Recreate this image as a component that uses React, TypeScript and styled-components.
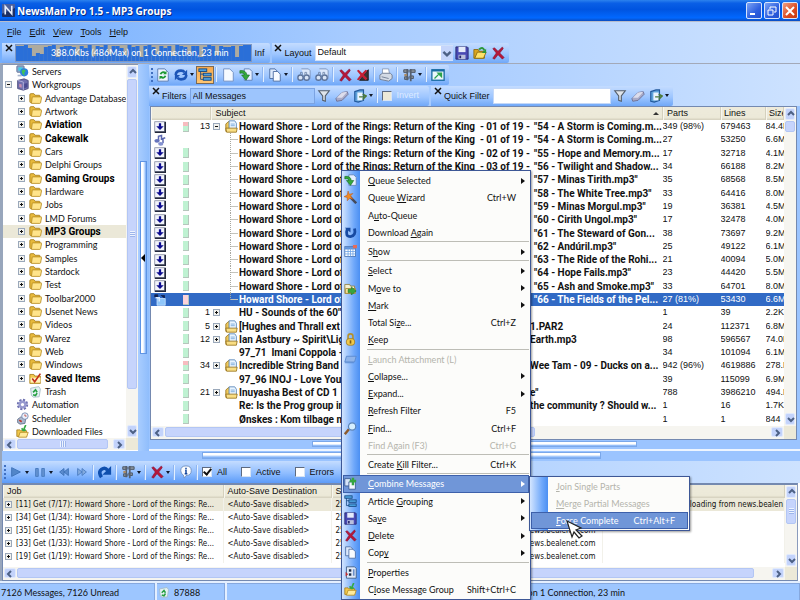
import React from 'react';
import styled, { createGlobalStyle, css } from 'styled-components';

const ui = '"Liberation Sans", Arial, sans-serif';
const menuFont = 'Lato, "Liberation Sans", sans-serif';
const boldFont = 'Roboto, "Liberation Sans", sans-serif';
const tinyFont = '"DejaVu Sans Condensed", "Liberation Sans", sans-serif';

const Global = createGlobalStyle`
  * { box-sizing: border-box; }
  body { margin: 0; font: 9px/13px ${ui}; color: #111; background: #9fc7ff; overflow: hidden; }
  button, input, select { font: inherit; color: inherit; margin: 0; padding: 0; border: 0; background: none; }
  svg { display: block; flex: none; }
  ul { list-style: none; margin: 0; padding: 0; }
`;

/* ---------- icons ---------- */

const art: Record<string, React.ReactNode> = {
  app: (<><rect width="16" height="16" rx="1" fill="#1b2f66" /><path d="M0 0h16v5L0 12z" fill="#4a5f9c" /><path d="M4 13V3l8 9V2" fill="none" stroke="#e8eefc" strokeWidth="2" /></>),
  servers: (<><rect x="1" y="1" width="9" height="8" rx="1" fill="#8ea4c8" stroke="#5f7398" /><rect x="3" y="3" width="5" height="4" fill="#3ad0e8" /><circle cx="10" cy="9" r="5" fill="#2c7fe0" /><path d="M7 7q3-3 5 0l-2 3 1 3q-4-1-4-6z" fill="#3fc25a" /><path d="M2 12h5v2H2z" fill="#a6b4cc" /></>),
  work: (<><path d="M2 3l8-2 5 2v10l-6 2-7-2z" fill="#6f6fae" stroke="#454578" /><path d="M2 3l7 2v10" fill="none" stroke="#b9b9e2" /><path d="M4 7l3 1v4l-3-1z" fill="#c98fb0" /><path d="M10 7l4-1v5l-4 2z" fill="#4a4a90" /></>),
  folder: (<><path d="M1 3.500q0-1.500 1.500-1.500h3.500l1.500 2h5q1 0 1 1v8H2q-1 0-1-1z" fill="#e7b93c" stroke="#a57c1a" /><path d="M3 14l1-7.500q0-.5.5-.5H15q.7 0 .5.8L14.300 13q-.2 1-1 1z" fill="#ffe48a" stroke="#b58a20" /></>),
  saved: (<><path d="M1 3h5l1 2h7v9H1z" fill="#f2c94c" stroke="#a57c1a" /><path d="M2 7h12v6H2z" fill="#fff2c0" /><path d="M4 8l3 4 7-10" fill="none" stroke="#c22f1c" strokeWidth="2" /></>),
  trash: (<><path d="M2 4l10-2 2 3-1.500 9.500-7 .5L3 13z" fill="#e4f1f4" stroke="#9fb8c0" /><path d="M5 9l3-3 2 3M10 10l-2 3-3-1" fill="none" stroke="#27a043" strokeWidth="2" /></>),
  gear: (<><circle cx="8" cy="8" r="5.500" fill="none" stroke="#6d70b0" strokeWidth="3" strokeDasharray="2.500 1.800" /><circle cx="8" cy="8" r="5" fill="#9699ce" /><circle cx="8" cy="8" r="2" fill="#fff" /></>),
  sched: (<><path d="M2 9l4-3 6 2-1 6-6 1-3-2z" fill="#a9b6cc" stroke="#5d6c88" /><circle cx="11" cy="5" r="4" fill="#eaf0fb" stroke="#6b7fa6" /><path d="M11 3v2h2" stroke="#c0392b" fill="none" /><path d="M4 10l3 2" stroke="#c0392b" strokeWidth="2" /></>),
  down: (<><path d="M1 6h4l1 1h7v7H1z" fill="#f2c94c" stroke="#a57c1a" /><path d="M3 15l2-6h10l-2 6z" fill="#ffeb9c" stroke="#b58a20" /><path d="M12 0L9 7M9 7L7 4M9 7l3-1" stroke="#35a845" strokeWidth="2" fill="none" /></>),
  refreshPage: (<><path d="M2 1h8l4 4v10H2z" fill="#eef5ff" stroke="#5275ad" /><path d="M5 7q3-4 6-1M11 9q-3 4-6 1" fill="none" stroke="#1f9a36" strokeWidth="2" /><path d="M12 3v4H8zM4 13V9h4z" fill="#1f9a36" /></>),
  cycle: (<><path d="M2 8q0-5 6-5 3 0 4 2M14 8q0 5-6 5-3 0-4-2" fill="none" stroke="#1c55b8" strokeWidth="3" /><path d="M15 2v6H9zM1 14V8h6z" fill="#1c55b8" /></>),
  tree: (<><path d="M3 3v10h5M3 7h5" fill="none" stroke="#1b4a84" /><rect x="1" y="1" width="9" height="3" fill="#4da2e0" stroke="#12457e" /><rect x="6" y="6" width="9" height="3" fill="#4da2e0" stroke="#12457e" /><rect x="6" y="11" width="9" height="3" fill="#4da2e0" stroke="#12457e" /></>),
  page: (<path d="M3 1h7l4 4v10H3z" fill="#f6faff" stroke="#6c8cc0" />),
  pageArrow: (<><path d="M6 1h6l3 3v10H6z" fill="#e6efff" stroke="#5d7fb6" /><path d="M1 3q7-1 8 5h3l-4 6-5-6h3Q6 5 1 6z" fill="#34a83c" stroke="#156b20" strokeWidth=".7" /></>),
  copy: (<><path d="M2 1h6l3 3v8H2z" fill="#dce9fc" stroke="#47689f" /><path d="M6 4h5l3 3v8H6z" fill="#f8fbff" stroke="#47689f" /></>),
  bino: (<><path d="M5 1h8l2 2v9H9" fill="#dce8fb" stroke="#7890b8" /><circle cx="4" cy="11" r="3" fill="#d8e4f6" stroke="#5b7198" strokeWidth="1.500" /><circle cx="11" cy="11" r="3" fill="#d8e4f6" stroke="#5b7198" strokeWidth="1.500" /><path d="M4 8V5h2v4h3V5h2v3" stroke="#7288ac" fill="none" /></>),
  x: (<path d="M2 3l2-1 4 4 5-5 1 2-4 5 5 5-2 2-5-5-4 5-2-1 4-6z" fill="#b5173b" stroke="#7c0f2c" strokeWidth=".6" />),
  xBlack: (<><path d="M14 2v12H4z" fill="#3c3434" stroke="#111" /><path d="M1 3l2-1 4 4 4-4 2 1-4 5 4 4-2 2-4-4-4 4-2-1 4-5z" fill="#c21f34" /></>),
  printer: (<><path d="M4 1h7l1 6H4z" fill="#fff" stroke="#8a9ab6" /><path d="M1 8l3-2h9l2 2v4l-4 3-10-2z" fill="#d3dae5" stroke="#6d7990" /><path d="M3 10l8 2" stroke="#6d7990" /></>),
  tools: (<><path d="M2 2h5v3H2zM9 2h6v3H9zM3 10h4v3H3zM9 9h4v3H9z" fill="#8b949e" stroke="#46505e" /><path d="M6 1v13M10 1v14" stroke="#56606e" strokeWidth="2" /><circle cx="4" cy="8" r="1.500" fill="#b08a5c" /></>),
  window: (<><rect x="1" y="2" width="14" height="12" fill="#eaf7fb" stroke="#176ba3" strokeWidth="1.500" /><path d="M1 3h14" stroke="#176ba3" strokeWidth="2" /><path d="M4 12l5-5M8 6h4v4z" fill="#2ba24c" stroke="#2ba24c" strokeWidth="1.500" /></>),
  funnel: (<path d="M2 2h12L9.500 8v6l-3-1V8z" fill="#dfe4ea" stroke="#545e6a" strokeWidth="1.300" />),
  eraser: (<><path d="M1 11l7-7 6-1 1 3-7 7-6 1z" fill="#a9abc8" stroke="#6c6e92" /><path d="M2 10l6-6 6-1-6 7z" fill="#dcddec" /></>),
  door: (<><path d="M2 3l6-2h4v12l-6 2-4-1z" fill="#5fa3dc" stroke="#23599c" strokeWidth="1.300" /><path d="M5 4h6v9H5z" fill="#eaf4ff" /><path d="M7 9h7M11 6l4 2-4 4" fill="none" stroke="#4d7a3a" strokeWidth="1.700" /></>),
  save: (<><path d="M1 1h13l1 1v13H1z" fill="#4a4ab4" stroke="#26266c" /><path d="M4 1h8v6H4z" fill="#e5ebfa" /><path d="M4 10h8v5H4z" fill="#b9c0dc" /><path d="M5 11h2v3H5z" fill="#26266c" /></>),
  open: (<><path d="M1 4h5l1 2h6v8H1z" fill="#d9a520" stroke="#8c6a10" /><path d="M2 14l3-7h10l-3 7z" fill="#ffe26a" stroke="#8c6a10" /><path d="M7 4q4-4 6 1" stroke="#2c9838" strokeWidth="2.200" fill="none" /><path d="M15 3v5h-5z" fill="#2c9838" /></>),
  play: (<path d="M3 3l10 5-10 5z" fill="#5286c9" stroke="#3c70b6" />),
  pause: (<path d="M3 4h3v9H3zM10 4h3v9h-3z" fill="#6593d2" stroke="#4578bd" />),
  rew: (<path d="M8 4v8L3 8zM13 4v8L8 8z" fill="#5b8bce" stroke="#3c70b6" />),
  ff: (<path d="M3 4l5 4-5 4zM8 4l5 4-5 4z" fill="#82aade" stroke="#4a7cc0" />),
  redo: (<><path d="M4 14Q0 8 4 5q4-3 7 1" fill="none" stroke="#0f4fae" strokeWidth="4" /><path d="M15 1v10H5z" fill="#0f4fae" /></>),
  undo: (<><path d="M4 4q-3 9 4 9 7-1 5-10" fill="none" stroke="#174aa2" strokeWidth="3.500" /><path d="M1 2h7v6z" fill="#174aa2" /></>),
  info: (<><path d="M8 1q6 0 6 5.500T8 12l-2 3-1-3.500Q2 10 2 6.500 2 1 8 1z" fill="#fbfdff" stroke="#6f8fbe" /><path d="M8 3v1.500M7 6h1v4M6.500 10h3" stroke="#12459c" strokeWidth="1.700" fill="none" /></>),
  wizard: (<><path d="M7 7l8 8" stroke="#444a5c" strokeWidth="3" /><path d="M5 0l1.500 4L11 3 8 6l3 4-4-1-3 3v-4L0 7l4-2z" fill="#f08a24" stroke="#b4521a" strokeWidth=".6" /></>),
  grid: (<><rect x="1" y="2" width="13" height="12" fill="#fff" stroke="#3f6db0" /><path d="M1 4h13" stroke="#5f93da" strokeWidth="3" /><path d="M1 8h13M1 11h13M5 4v10M8 4v10M11 4v10" stroke="#6fa4e6" /><rect x="11" y="0" width="5" height="4" fill="#e26d5c" /></>),
  move: (<><path d="M1 3h6l1 2h5v9H1z" fill="#f4f0d2" stroke="#8c7a3a" /><path d="M2 8h12v6H2z" fill="#ffe9a0" stroke="#a08530" /><path d="M5 9h4V6l6 5-6 5v-3H5z" fill="#37a53c" stroke="#1a6e22" strokeWidth=".7" /></>),
  lock: (<><path d="M5 8V4q0-3 3-3t3 3v4" fill="none" stroke="#b5912c" strokeWidth="2" /><rect x="3" y="7" width="10" height="8" rx="3" fill="#f1c94a" stroke="#a37b18" /><path d="M8 9v4" stroke="#7c5a10" strokeWidth="2" /></>),
  launch: (<path d="M3 4h12l-2 7H1zM1 12h11" fill="#8fb4ea" stroke="#5585cc" />),
  find: (<><path d="M1 15l5-6" stroke="#8c5a2c" strokeWidth="3" /><circle cx="10" cy="5.500" r="4.500" fill="#d6efff" stroke="#5a83b8" strokeWidth="1.500" /></>),
  combine: (<><path d="M1 2h7v9H1z" fill="#d9e6fa" stroke="#34568c" /><path d="M6 6h8v9H6z" fill="#f4f8ff" stroke="#34568c" /><path d="M11 1v9M7 5h8" stroke="#36a640" strokeWidth="3" /></>),
  props: (<><path d="M3 1h10l2 2v12H3z" fill="#dfe9f8" stroke="#33527e" /><path d="M6 4h3v3H6z" fill="#1c2c48" /><path d="M6 9h3v3H6z" fill="#1c2c48" /><path d="M2 7l3 3-3 3z" fill="#c32b2b" /><path d="M11 4h2v8h-2z" fill="#6b8fc8" /></>),
  mail: (<><path d="M1 5l3-3h2l1 3v9H1z" fill="#efc85a" stroke="#95701a" /><path d="M5 1h7l2 3v8H5z" fill="#e9f4ff" stroke="#4d7fb6" /><path d="M7 5h5M7 7h5" stroke="#6fa3d8" /><path d="M1 10h14l-1 5H2z" fill="#f9de84" stroke="#95701a" /></>),
  box: (<><rect x="1" y="1" width="13" height="13" fill="#f2f4fb" stroke="#7c8298" /><path d="M15 1v14H1" fill="none" stroke="#23283c" strokeWidth="2" /><path d="M8 3v5" stroke="#0b0b90" strokeWidth="3" /><path d="M3 7h10l-5 5z" fill="#0b0b90" /></>),
  notes: (<><path d="M6 10V3l4-1v6M12 12V6l3-1" fill="none" stroke="#5b67b0" strokeWidth="2" /><ellipse cx="4" cy="9" rx="3.500" ry="2.500" fill="#6674bc" /><ellipse cx="9" cy="13" rx="3.500" ry="2.500" fill="#8491d0" /></>),
  disc: (<><path d="M1 1h4v3H1zM9 2h5v4" fill="#10204e" stroke="#10204e" /><path d="M4 6h11v9H4z" fill="#8fc6fa" stroke="#cfe5ff" /><path d="M2 5h5v5" stroke="#d6e8ff" fill="none" strokeWidth="2" /></>),
};

const Icon = ({ n, s = 14 }: { n: string; s?: number }) => (
  <svg width={s} height={s} viewBox="0 0 16 16" aria-hidden="true">{art[n]}</svg>
);

const Arrow = ({ dir }: { dir: 'up' | 'down' | 'left' | 'right' }) => {
  const d = { up: 'M2 6l3-3 3 3', down: 'M2 4l3 3 3-3', left: 'M6 2L3 5l3 3', right: 'M4 2l3 3-3 3' }[dir];
  return <svg width="10" height="10" viewBox="0 0 10 10"><path d={d} fill="none" stroke="#4d6185" strokeWidth="2" /></svg>;
};

/* ---------- frame ---------- */

const Window = styled.div`
  position: relative; display: flex; flex-direction: column; height: 100vh; min-height: 600px; overflow: hidden;
`;
const TitleBar = styled.header`
  display: flex; align-items: center; height: 21px; padding: 0 2px; gap: 2px;
  background: linear-gradient(#2c82ee, #0a5fe6 15%, #0054e0 45%, #0168ff 85%, #0b4cc0);
`;
const Title = styled.h1`
  flex: 1; margin: 0; color: #fff; font: 700 10px/14px "Open Sans", sans-serif; text-shadow: 1px 1px #0a2a80;
`;
const Caption = styled.button<{ $close?: boolean }>`
  display: grid; place-items: center; width: 16px; height: 17px; border: 1px solid #d6e4fc; border-radius: 2px;
  background: ${(p) => (p.$close ? 'linear-gradient(135deg, #f0a084, #dc4a20 60%, #c33a12)' : 'linear-gradient(135deg, #7ba2f4, #2d5fe0 60%, #2350cc)')};
`;
const MenuBar = styled.nav`
  display: flex; align-items: center; height: 21px; padding: 0 7px; gap: 8px; border-top: 1px solid #b8bccb;
  background: linear-gradient(90deg, #75affe, #a8ccff 45%, #cde2ff);
`;
const Dock = styled.div<{ $line?: boolean }>`
  display: flex; align-items: center; height: ${(p) => (p.$line ? 22 : 21)}px;
  background: linear-gradient(90deg, #88b9fe, #a8ccff 45%, #cde2ff);
  ${(p) => p.$line && css`border-bottom: 1px solid #a3a9b8; padding-left: 2px; background: linear-gradient(90deg, #75affe, #a8ccff 45%, #cde2ff);`}
`;
const Band = styled.div`
  display: flex; align-items: center; flex: none; height: 20px; margin-right: 2px; padding-right: 2px;
  background: linear-gradient(#c4dcff, #9ec6ff 55%, #70a8f8); border-radius: 0 2px 2px 0;
`;
const CloseBtn = styled.button`
  display: grid; justify-items: center; align-content: start; width: 13px; height: 18px; flex: none;
`;
const Grip = styled.span`
  width: 2px; height: 14px; margin: 0 1px 0 2px; border-left: 2px dotted #3f6fc0;
`;
const ToolButton = styled.button<{ $on?: boolean }>`
  display: grid; place-items: center; flex: none; width: 18px; height: 18px;
  ${(p) => p.$on && css`background: linear-gradient(#f6a94e, #ffc672); border: 1px solid #7a6a58;`}
`;
const CaretBtn = styled.button`
  flex: none; width: 6px; height: 18px; display: grid; place-items: center start;
  &::before { content: ''; border: 2px solid transparent; border-top: 3px solid #101828; border-bottom: 0; }
`;
const Sep = styled.span`
  flex: none; width: 2px; height: 15px; margin: 0 2px 0 1px; background: #e2efff; border-left: 1px solid #8eb6f2;
`;
const Graph = styled.div`
  display: grid; width: 237px; height: 18px; background: #aeab9f; border: 1px solid #7e98c4;
  & > * { grid-area: 1 / 1; }
  svg { width: 100%; height: 16px; }
`;
const GraphText = styled.span` align-self: center; padding-left: 35px; color: #fff; font: 9px/13px ${menuFont}; z-index: 1; `;
const BandLabel = styled.label` padding: 2px 3px 0 0; white-space: nowrap; `;
const LayoutSelect = styled.select`
  appearance: none; width: 138px; height: 16px; padding-left: 2px; background: #fff; border: 1px solid #cfe0fa; border-right: 0;
`;
const SelectWrap = styled.span`
  display: flex; align-items: center; background: #fff;
  svg { margin-left: -12px; width: 12px; height: 14px; background: #c5d5fb; pointer-events: none; }
`;
const Field = styled.input<{ $blue?: boolean }>`
  width: ${(p) => (p.$blue ? 125 : 118)}px; height: 16px; padding: 0 2px;
  background: ${(p) => (p.$blue ? '#9dc5fd' : '#fff')}; border: 1px solid ${(p) => (p.$blue ? '#7ba3e2' : '#c4d8f8')};
`;
const Tick = styled.input`
  appearance: none; width: 10px; height: 10px; background: #fff; border: 1px solid #5d6a80; border-right-color: #d7e4f5; border-bottom-color: #d7e4f5;
  display: grid; place-items: center; flex: none;
  &:disabled { background: #ece9d8; }
  &:checked::before { content: ''; width: 3px; height: 6px; margin-top: -2px; border: solid #111; border-width: 0 2px 2px 0; transform: rotate(40deg); }
`;
const TickLabel = styled.label<{ $off?: boolean }>`
  display: flex; align-items: center; gap: 5px; margin: 0 ${(p) => (p.$off ? 8 : 12)}px 0 2px; color: ${(p) => (p.$off ? '#dceaff' : '#111')};
`;

const Main = styled.main` flex: 1; display: flex; min-height: 0; `;

/* ---------- scroll bars ---------- */

const Track = styled.div<{ $v?: boolean }>`
  display: flex; flex-direction: ${(p) => (p.$v ? 'column' : 'row')}; flex: none; gap: 1px; padding: 1px; background: #f6f5f0;
  ${(p) => (p.$v ? 'width: 12px;' : 'height: 12px; flex: 1;')}
`;
const TrackBtn = styled.button`
  display: grid; place-items: center; flex: none; min-width: 10px; min-height: 10px; border-radius: 2px; background: #c3d3fb; border: 1px solid #e1eafd;
`;
const Thumb = styled.div<{ $grow: number; $grip?: boolean; $v?: boolean }>`
  flex: ${(p) => p.$grow} 1 0; display: grid; place-items: center; border-radius: 2px; border: 1px solid #b3c6f4; background: #c6d4fc;
  &::before {
    content: ''; width: ${(p) => (p.$v ? 5 : 6)}px; height: 6px; opacity: ${(p) => (p.$grip ? 1 : 0)};
    background: repeating-linear-gradient(${(p) => (p.$v ? '180deg' : '90deg')}, #eef4ff 0 1px, #9db5ea 1px 2px);
  }
`;
const Rest = styled.div<{ $grow: number }>` flex: ${(p) => p.$grow} 1 0; `;
const Corner = styled.div` width: 12px; background: #ece9d8; `;

function Scroll({ v, thumb, rest, grip }: { v?: boolean; thumb: number; rest: number; grip?: boolean }) {
  return (
    <Track $v={v}>
      <TrackBtn aria-label="Scroll back"><Arrow dir={v ? 'up' : 'left'} /></TrackBtn>
      <Thumb $v={v} $grow={thumb} $grip={grip} />
      <Rest $grow={rest} />
      <TrackBtn aria-label="Scroll forward"><Arrow dir={v ? 'down' : 'right'} /></TrackBtn>
    </Track>
  );
}

/* ---------- folder tree ---------- */

const Side = styled.aside`
  display: flex; flex-direction: column; width: 138px; background: #fff; border-left: 3px solid #98a6bc; border-top: 1px solid #8595b0;
`;
const SideBody = styled.div` flex: 1; display: flex; min-height: 0; `;
const Tree = styled.ul` flex: 1; display: flex; flex-direction: column; min-width: 0; font: 9px/13px ${menuFont}; `;
const Node = styled.li<{ $deep?: boolean; $bold?: boolean; $sel?: boolean }>`
  flex: 1; display: flex; align-items: center; min-height: 0; gap: 3px; white-space: nowrap;
  padding-left: ${(p) => (p.$deep ? 15 : 2)}px; background: ${(p) => (p.$sel ? '#ebe8d8' : 'none')};
  ${(p) => p.$bold && css`font: 700 10px/13px ${boldFont}; color: #000;`}
`;
const Expander = styled.button<{ $open?: boolean; $none?: boolean }>`
  display: grid; place-items: center; width: 7px; height: 7px; margin-right: 1px; flex: none;
  border: 1px solid #9aa8ba; background: #f2f2ee;
  visibility: ${(p) => (p.$none ? 'hidden' : 'visible')};
  &::before, &::after { content: ''; grid-area: 1 / 1; background: #111; }
  &::before { width: 3px; height: 1px; }
  &::after { width: 1px; height: ${(p) => (p.$open ? 1 : 3)}px; }
`;
const SideBottom = styled.div` display: flex; height: 13px; border-bottom: 1px solid #fff; `;

const Splitter = styled.div`
  display: flex; align-items: center; justify-content: center; width: 11px; background: linear-gradient(90deg, #a9cdff, #8fbdfc);
`;
const SplitHandle = styled.button`
  width: 7px; height: 50%; background: linear-gradient(90deg, #fff 0 2px, #a9ccfd 4px, #6fa5f2); border: 1px solid #5e94e4;
  display: flex; align-items: center;
  &::before { content: ''; border: 4px solid transparent; border-right-color: #000; border-left: 0; }
`;

/* ---------- message list ---------- */

const Right = styled.section` flex: 1; display: flex; flex-direction: column; min-width: 0; background: #9bc4ff; `;
const ListFrame = styled.div`
  flex: 1; display: flex; flex-direction: column; min-height: 0; margin: 0 3px 0 1px; border: 1px solid #7489b0;
`;
const ListBody = styled.div` flex: 1; display: flex; min-height: 0; background: #fff; `;
const TableBox = styled.div` flex: 1; min-width: 0; overflow: hidden; `;
const Table = styled.table`
  width: 100%; height: 100%; table-layout: fixed; border-collapse: collapse;
  td, th { padding: 0; white-space: nowrap; overflow: hidden; text-align: left; font-weight: 400; line-height: 13px; }
`;
const HeadCell = styled.th<{ $pad?: number }>`
  height: 13px; background: linear-gradient(#edeadb, #ece9d8 80%, #d3cfbc); border-right: 1px solid #d4d0bd; box-shadow: inset 1px 0 #f8f6ee;
  && { padding-left: ${(p) => p.$pad || 0}px; }
`;
const HeadFlex = styled.div` display: flex; align-items: center; justify-content: space-between; padding-right: 3px;
  &::after { content: ''; border: 3px solid transparent; border-bottom: 3px solid #333; border-top: 0; } `;
const Row = styled.tr<{ $sel?: boolean }>`
  color: ${(p) => (p.$sel ? '#fff' : '#111')}; background: ${(p) => (p.$sel ? '#316ac5' : 'none')};
`;
const IconCell = styled.td` svg { margin-left: 3px; } `;
const Mark = styled.span<{ $pink?: boolean; $half?: boolean }>`
  display: block; width: 6px; height: 10px; margin-left: 2px; border: 1px solid #b6c6bc; border-width: 0 1px 1px 0;
  background: ${(p) => (p.$pink ? '#fbd3da' : p.$half ? 'linear-gradient(#f7bcc0 40%, #bff2d2 40%)' : '#bff2d2')};
`;
const CountCell = styled.td` && { text-align: right; } `;
const ToggleCell = styled.td` button { margin-left: 3px; } `;
const Subject = styled.div` display: flex; align-items: center; height: 13px; font: 700 10px/13px ${boldFont}; `;
const Branch = styled.span<{ $child?: boolean; $last?: boolean }>`
  display: grid; width: 17px; height: 13px; flex: none;
  &::before {
    content: ''; grid-area: 1 / 1; width: 7px; height: ${(p) => (p.$last ? 7 : 13)}px; margin-left: 8px; border-left: 1px dotted #a8a8a0;
    background: linear-gradient(90deg, #c4c4bc, #c4c4bc) 0 6px / 7px 1px no-repeat; visibility: ${(p) => (p.$child ? 'visible' : 'hidden')};
  }
  svg { grid-area: 1 / 1; margin-left: 3px; }
`;
const Lead = styled.span<{ $short?: boolean }>` flex: none; width: ${(p) => (p.$short ? 291 : 295)}px; overflow: hidden; white-space: pre; `;
const HBottom = styled.div` display: flex; height: 13px; background: #f6f5f0; `;
const HSplit = styled.div<{ $low?: boolean }>`
  display: flex; height: ${(p) => (p.$low ? 10 : 11)}px; padding: 1px 25% 2px;
  background: #9bc4ff;
  border-bottom: ${(p) => (p.$low ? '0' : '2px solid #eef5ff')};
`;
const HHandle = styled.button` flex: 1; border: 1px solid #7ba8ea; background: linear-gradient(#fff 0 2px, #b9d5fd 3px, #6fa5f2); `;

type Msg = [icon: string, mark: string, count: string, kind: string, lead: string, tail: string, parts: string, lines: string, size: string];
const HS = 'Howard Shore - Lord of the Rings: Return of the King  - ';
const msgs: Msg[] = [
  ['box', 'half', '13', 'open', HS + '01 of 19 -', '"54 - A Storm is Coming.m...', '349 (98%)', '679463', '84.4M'],
  ['notes', '', '', 'child', HS + '01 of 19 -', '"54 - A Storm is Coming.m...', '27', '53250', '6.6M'],
  ['box', 'g', '', 'child', HS + '02 of 19 -', '"55 - Hope and Memory.m...', '17', '32718', '4.1M'],
  ['box', 'g', '', 'child', HS + '03 of 19 -', '"56 - Twilight and Shadow...', '34', '66188', '8.2M'],
  ['box', 'g', '', 'child', HS + '04 of 19 -', '"57 - Minas Tirith.mp3"', '35', '68568', '8.5M'],
  ['box', 'g', '', 'child', HS + '05 of 19 -', '"58 - The White Tree.mp3"', '33', '64416', '8.0M'],
  ['box', 'g', '', 'child', HS + '06 of 19 -', '"59 - Minas Morgul.mp3"', '19', '36381', '4.5M'],
  ['box', 'g', '', 'child', HS + '07 of 19 -', '"60 - Cirith Ungol.mp3"', '17', '32478', '4.0M'],
  ['box', 'g', '', 'child', HS + '08 of 19 -', '"61 - The Steward of Gon...', '38', '73697', '9.2M'],
  ['box', 'g', '', 'child', HS + '09 of 19 -', '"62 - Andúril.mp3"', '25', '49122', '6.1M'],
  ['box', 'g', '', 'child', HS + '10 of 19 -', '"63 - The Ride of the Rohi...', '21', '40094', '5.0M'],
  ['box', 'g', '', 'child', HS + '11 of 19 -', '"64 - Hope Fails.mp3"', '23', '44420', '5.5M'],
  ['box', 'g', '', 'child', HS + '12 of 19 -', '"65 - Ash and Smoke.mp3"', '33', '64701', '8.0M'],
  ['disc', 'pink', '', 'last', HS + '13 of 19 -', '"66 - The Fields of the Pel...', '27 (81%)', '53430', '6.6M'],
  ['', 'g', '1', 'plain', 'HU - Sounds of the 60"', '', '1', '39', '2.2K'],
  ['', 'g', '5', 'group', '[Hughes and Thrall ext', '1.PAR2', '24', '112371', '6.8M'],
  ['', 'g', '12', 'group', 'Ian Astbury ~ Spirit\\Light', 'Earth.mp3', '98', '596567', '74.0M'],
  ['', 'g', '', '', '97_71  Imani Coppola -', '', '34', '101094', '6.1M'],
  ['', 'half', '34', 'group', 'Incredible String Band', 'Wee Tam - 09 - Ducks on a...', '942 (96%)', '4619886', '278.M'],
  ['', 'g', '', '', '97_96 INOJ - Love You', '', '39', '115099', '6.9M'],
  ['', 'g', '21', 'group', 'Inuyasha Best of CD 1', 'e"', '788', '3986210', '494.M'],
  ['', 'g', '', '', 'Re: Is the Prog group in', 'the community ? Should w...', '1', '16', '1.7K'],
  ['', 'g', '', '', 'Ønskes : Kom tilbage med', '', '1', '1', '844'],
];

/* ---------- queue ---------- */

const Queue = styled.section` background: #fff; border-left: 2px solid #98a6bc; `;
const QueueBar = styled.div`
  display: flex; align-items: center; height: 22px; background: linear-gradient(90deg, #88b9fe, #a8ccff 45%, #cde2ff);
`;
const QueueBand = styled(Band)` height: 22px; background: linear-gradient(#c4dcff, #8fbdff 55%, #5c9bf8); `;
const QueueFrame = styled.div` margin-right: 2px; border: 1px solid #7489b0; border-top-width: 2px; border-right-color: #8a9bbd; `;
const QueueBody = styled.div` display: flex; height: 82px; `;
const QueueTable = styled(Table)`
  height: auto; color: #111;
  td { border-right: 1px solid #f2f1ea; font: 8px/13px ${tinyFont}; }
  tr:first-child td { background: #ebe8d8; }
`;
const JobCell = styled.div` display: flex; align-items: center; gap: 3px; padding-left: 2px; `;
const PadCell = styled.td<{ $end?: number }>` && { padding-left: 4px; padding-right: ${(p) => p.$end || 0}px; text-align: ${(p) => (p.$end ? 'right' : 'left')}; } `;

const Status = styled.footer` display: flex; gap: 2px; height: 19px; padding-top: 2px; background: #e4efff; font: 9px/13px ${menuFont}; `;
const Panel = styled.div<{ $w?: number }>`
  display: flex; align-items: center; gap: 4px; padding: 0 1px; background: #9dc6ff; border: 1px solid #86a8de; border-width: 1px 1px 0 0;
  ${(p) => (p.$w ? `width: ${p.$w}px;` : 'flex: 1; justify-content: flex-end; padding-right: 174px;')}
`;

/* ---------- popups ---------- */

const Popup = styled.div<{ $sub?: boolean }>`
  position: absolute; display: flex; flex-direction: column; padding: 1px; border: 1px solid #3d5796;
  background: linear-gradient(90deg, #d3e5ff, #6fa8fa 12px, #4b8ff2 18px, #fcfcfa 18px); box-shadow: 1px 1px 2px #0006;
  font: 9px/13px ${menuFont};
  ${(p) => (p.$sub ? 'left: 529px; top: 476px; width: 161px; height: 55px;' : 'left: 341px; top: 170px; width: 190px; height: 430px;')}
`;
const Item = styled.button<{ $hot?: boolean; $off?: boolean }>`
  flex: 1; min-height: 0; display: flex; align-items: center; text-align: left; white-space: nowrap;
  color: ${(p) => (p.$hot ? '#fff' : p.$off ? '#b4b4ac' : '#111')};
  ${(p) => p.$hot && css`background: #7096d8; box-shadow: inset 0 0 0 1px #3d60aa;`}
`;
const ItemIcon = styled.span` width: 25px; padding-left: 1px; flex: none; `;
const ItemText = styled.span` flex: 1; `;
const Short = styled.span` padding-right: 13px; `;
const SubArrow = styled.span` margin-right: 4px; border: 3px solid transparent; border-left: 4px solid currentColor; border-right: 0; `;
const Rule = styled.hr` flex: none; height: 1px; margin: 0 0 1px 24px; border: 0; background: #bdbdb6; `;
const Pointer = styled.svg` position: absolute; left: 566px; top: 519px; `;

const Keyed = ({ t }: { t: string }) => {
  const i = t.indexOf('&');
  if (i < 0) return <>{t}</>;
  return <span>{t.slice(0, i)}<u>{t[i + 1]}</u>{t.slice(i + 2)}</span>;
};

const menu: (string[] | null)[] = [
  ['pageArrow', '&Queue Selected', '>'], ['wizard', 'Queue &Wizard', 'Ctrl+W'], ['', 'A&uto-Queue', ''], ['undo', 'Download &Again', ''], null,
  ['grid', 'S&how', '>'], null,
  ['', '&Select', '>'], ['move', 'M&ove to', '>'], ['', '&Mark', '>'], ['', 'Total Si&ze...', 'Ctrl+Z'], ['lock', '&Keep', ''], null,
  ['launch', '&Launch Attachment (L)', '', 'off'], ['', '&Collapse...', '>'], ['', '&Expand...', '>'], ['', '&Refresh Filter', 'F5'], ['find', '&Find...', 'Ctrl+F'], ['', 'Find Again (F3)', 'Ctrl+G', 'off'], null,
  ['', 'Create &Kill Filter...', 'Ctrl+K'], null,
  ['combine', '&Combine Messages', '>', 'hot'], ['tree', 'Article &Grouping', '>'], ['save', 'Sa&ve', '>'], ['x', '&Delete', '>'], ['copy', 'Cop&y', '>'], null,
  ['props', '&Properties', ''], ['down', 'C&lose Message Group', 'Shift+Ctrl+C'],
];

const plain = ['Advantage Database', 'Artwork', '*Aviation', '*Cakewalk', 'Cars', 'Delphi Groups', '*Gaming Groups', 'Hardware', 'Jobs', 'LMD Forums', '*MP3 Groups', 'Programming', 'Samples', 'Stardock', 'Test', 'Toolbar2000', 'Usenet News', 'Videos', 'Warez', 'Web', 'Windows'];

const tops = [1, 1, 0, 3, 11, 8, 9, 2, 1, 0, 12, 2, 1, 1, 2, 10, 1, 3, 0, 11, 1, 2, 0, 9, 1, 1, 3, 10, 0, 2, 1, 12, 1, 0, 2, 9, 1, 3, 1, 11, 0, 1, 2, 9, 1, 1, 12, 2, 0, 1, 10, 1, 2, 2, 1, 12, 1, 0, 0];

const Tools = ({ list }: { list: string }) => (
  <>{list.split(' ').map((t, i) => {
    if (t === '|') return <Sep key={i} />;
    if (t === 'v') return <CaretBtn key={i} aria-label="More" />;
    const on = t[0] === '!';
    const n = on ? t.slice(1) : t;
    return <ToolButton key={i} $on={on} aria-label={n}><Icon n={n} /></ToolButton>;
  })}</>
);

const Close = () => (
  <CloseBtn aria-label="Close bar"><svg width="8" height="8" viewBox="0 0 8 8"><path d="M1 1l6 6M7 1L1 7" stroke="#111" strokeWidth="1.500" /></svg></CloseBtn>
);

export default function App() {
  return (
    <Window>
      <Global />
      <TitleBar>
        <Icon n="app" s={13} />
        <Title>NewsMan Pro 1.5 - MP3 Groups</Title>
        <Caption aria-label="Minimize"><svg width="10" height="10"><path d="M1 8h5" stroke="#fff" strokeWidth="2" /></svg></Caption>
        <Caption aria-label="Restore"><svg width="10" height="10"><path d="M3 3V1h6v5H7M1 4h5v5H1z" fill="none" stroke="#fff" /></svg></Caption>
        <Caption $close aria-label="Close"><svg width="10" height="10"><path d="M1 1l8 8M9 1L1 9" stroke="#fff" strokeWidth="2" /></svg></Caption>
      </TitleBar>
      <MenuBar>
        {['&File', '&Edit', '&View', '&Tools', '&Help'].map((t) => <button key={t}><Keyed t={t} /></button>)}
      </MenuBar>
      <Dock $line>
        <Band>
          <Close />
          <Graph>
            <svg viewBox="0 0 236 16" preserveAspectRatio="none">
              {tops.map((t, i) => <rect key={i} x={i * 4} y={t} width="4" height={16 - t} fill="#2a6fd8" />)}
            </svg>
            <GraphText>388.0Kbs (486Max) on 1 Connection, 23 min</GraphText>
          </Graph>
          <BandLabel as="span">&nbsp;Inf</BandLabel>
        </Band>
        <Band>
          <Close />
          <BandLabel htmlFor="layout">Layout</BandLabel>
          <SelectWrap>
            <LayoutSelect id="layout"><option>Default</option></LayoutSelect>
            <Arrow dir="down" />
          </SelectWrap>
          <Tools list="save open x" />
        </Band>
      </Dock>
      <Main>
        <Side>
          <SideBody>
            <Tree>
              <Node><Expander $none /><Icon n="servers" s={13} />Servers</Node>
              <Node><Expander $open aria-label="Collapse" /><Icon n="work" s={13} />Workgroups</Node>
              {plain.map((p) => {
                const bold = p[0] === '*';
                const name = bold ? p.slice(1) : p;
                return <Node key={p} $deep $bold={bold} $sel={name === 'MP3 Groups'}><Expander aria-label="Expand" /><Icon n="folder" s={13} />{name}</Node>;
              })}
              <Node $deep $bold><Expander aria-label="Expand" /><Icon n="saved" s={13} />Saved Items</Node>
              <Node $deep><Expander $none /><Icon n="trash" s={13} />Trash</Node>
              <Node><Expander $none /><Icon n="gear" s={13} />Automation</Node>
              <Node><Expander $none /><Icon n="sched" s={13} />Scheduler</Node>
              <Node><Expander $none /><Icon n="down" s={13} />Downloaded Files</Node>
            </Tree>
            <Scroll v thumb={310} rest={34} grip />
          </SideBody>
          <SideBottom><Scroll thumb={90} rest={3} grip /><Corner /></SideBottom>
        </Side>
        <Splitter><SplitHandle aria-label="Hide folders" /></Splitter>
        <Right>
          <Dock>
            <Band>
              <Grip />
              <Tools list="refreshPage cycle v !tree | page pageArrow v | copy v | bino bino | x xBlack | printer | tools v | window" />
            </Band>
          </Dock>
          <Dock>
            <Band>
              <Close />
              <BandLabel htmlFor="filter">Filters</BandLabel>
              <Field $blue id="filter" defaultValue="All Messages" />
              <Tools list="funnel eraser door v |" />
              <TickLabel $off><Tick type="checkbox" disabled />Invert</TickLabel>
            </Band>
            <Band>
              <Close />
              <BandLabel htmlFor="quick">Quick Filter</BandLabel>
              <Field id="quick" />
              <Tools list="funnel eraser door v" />
            </Band>
          </Dock>
          <ListFrame>
            <ListBody>
              <TableBox>
                <Table>
                  <colgroup><col width="30" /><col width="10" /><col width="19" /><col width="12" /><col /><col width="58" /><col width="45" /><col width="18" /></colgroup>
                  <thead>
                    <tr>
                      <HeadCell colSpan={3} />
                      <HeadCell colSpan={2} $pad={5}><HeadFlex>Subject</HeadFlex></HeadCell>
                      <HeadCell $pad={4}>Parts</HeadCell><HeadCell $pad={3}>Lines</HeadCell><HeadCell $pad={3}>Size</HeadCell>
                    </tr>
                  </thead>
                  <tbody>
                    {msgs.map(([icon, mark, count, kind, lead, tail, parts, lines, size], i) => (
                      <Row key={i} $sel={kind === 'last'}>
                        <IconCell>{icon && <Icon n={icon} s={12} />}</IconCell>
                        <td>{mark && <Mark $pink={mark === 'pink'} $half={mark === 'half'} />}</td>
                        <CountCell>{count}</CountCell>
                        <ToggleCell>{count && <Expander $open={kind === 'open'} aria-label="Toggle" />}</ToggleCell>
                        <td>
                          <Subject>
                            <Branch $child={kind === 'child' || kind === 'last'} $last={kind === 'last'}>
                              {(kind === 'open' || kind === 'group') && <Icon n="mail" s={13} />}
                            </Branch>
                            <Lead $short={i > 13}>{lead}</Lead>{tail}
                          </Subject>
                        </td>
                        <td>{parts}</td><td>{lines}</td><td>{size}</td>
                      </Row>
                    ))}
                  </tbody>
                </Table>
              </TableBox>
              <Scroll v thumb={9} rest={285} />
            </ListBody>
            <HBottom><Scroll thumb={368} rest={234} /><Corner /></HBottom>
          </ListFrame>
          <HSplit><HHandle aria-label="Hide preview" /></HSplit>
        </Right>
      </Main>
      <Queue>
        <HSplit $low><HHandle aria-label="Hide queue" /></HSplit>
        <QueueBar>
          <QueueBand>
            <Grip />
            <Tools list="play v pause v rew ff | redo | tools v | x v | info |" />
            <TickLabel><Tick type="checkbox" defaultChecked />All</TickLabel>
            <TickLabel><Tick type="checkbox" />Active</TickLabel>
            <TickLabel><Tick type="checkbox" />Errors</TickLabel>
          </QueueBand>
        </QueueBar>
        <QueueFrame>
          <QueueBody>
            <TableBox>
              <QueueTable>
                <colgroup><col width="220" /><col width="108" /><col width="20" /><col width="251" /><col /></colgroup>
                <thead><tr><HeadCell $pad={4}>Job</HeadCell><HeadCell $pad={4}>Auto-Save Destination</HeadCell><HeadCell $pad={4}>S</HeadCell><HeadCell /><HeadCell /></tr></thead>
                <tbody>
                  {['[11] Get (7/17)', '[34] Get (1/34)', '[35] Get (1/35)', '[33] Get (1/33)', '[19] Get (1/19)'].map((j, i) => (
                    <tr key={j}>
                      <td><JobCell><Expander aria-label="Expand" />{j}: Howard Shore - Lord of the Rings: Re...</JobCell></td>
                      <PadCell>&lt;Auto-Save disabled&gt;</PadCell>
                      <PadCell>25</PadCell>
                      <PadCell $end={6}>news.bealenet.com</PadCell>
                      <PadCell $end={1}>{i === 0 ? 'Downloading from news.bealen' : ''}</PadCell>
                    </tr>
                  ))}
                </tbody>
              </QueueTable>
            </TableBox>
            <Scroll v thumb={24} rest={30} grip />
          </QueueBody>
          <HBottom><Scroll thumb={740} rest={16} /><Corner /></HBottom>
        </QueueFrame>
      </Queue>
      <Status>
        <Panel $w={155}>7126 Messages, 7126 Unread</Panel>
        <Panel $w={68}><Icon n="trash" s={12} />87888</Panel>
        <Panel>on 1 Connection, 23 min</Panel>
      </Status>

      <Popup role="menu">
        {menu.map((m, i) => m ? (
          <Item key={i} role="menuitem" $hot={m[3] === 'hot'} $off={m[3] === 'off'}>
            <ItemIcon>{m[0] && <Icon n={m[0]} s={13} />}</ItemIcon>
            <ItemText><Keyed t={m[1]} /></ItemText>
            {m[2] === '>' ? <SubArrow /> : m[2] && <Short>{m[2]}</Short>}
          </Item>
        ) : <Rule key={i} />)}
      </Popup>
      <Popup $sub role="menu">
        <Item role="menuitem" $off><ItemIcon /><ItemText><Keyed t="&Join Single Parts" /></ItemText></Item>
        <Item role="menuitem" $off><ItemIcon /><ItemText><Keyed t="&Merge Partial Messages" /></ItemText></Item>
        <Item role="menuitem" $hot><ItemIcon /><ItemText><Keyed t="&Force Complete" /></ItemText><Short>Ctrl+Alt+F</Short></Item>
      </Popup>
      <Pointer width="20" height="20" viewBox="0 0 20 20"><path d="M1 2l14 7-5 2 6 6-3 2-5-6-2 5z" fill="#fff" stroke="#222" strokeWidth="1.200" /></Pointer>
    </Window>
  );
}
